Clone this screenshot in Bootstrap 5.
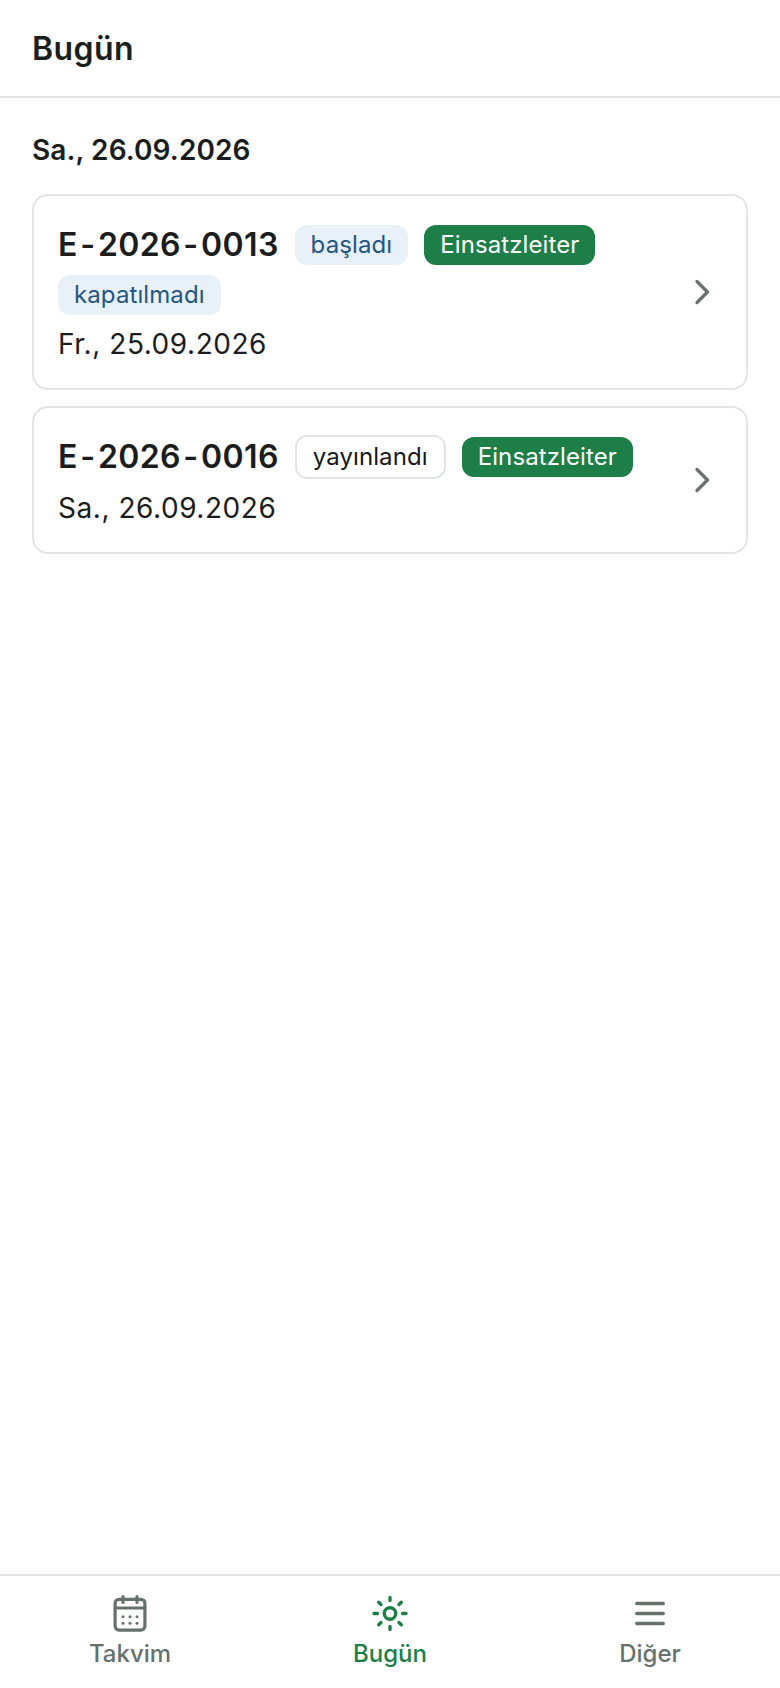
<!DOCTYPE html>
<html lang="tr">
<head>
    <meta charset="UTF-8">
    <meta name="viewport" content="width=device-width, initial-scale=1.0">
    <title>Bugün</title>
    <link href="https://cdn.jsdelivr.net/npm/bootstrap@5.3.0/dist/css/bootstrap.min.css" rel="stylesheet">
    <style>
        html, body { height: 100%; }
        body { font-family: Inter, "Noto Sans", sans-serif; color: #1a1d1c; background: #fff; }
        .app-shell { height: 1688px; }
        .top-bar { height: 98px; padding: 2px 32px 0; border-bottom: 2px solid #e3e5e5; }
        .top-title { font-size: 32px; font-weight: 600; letter-spacing: .4px; margin: 0; color: #1a1f1b; }
        .page-body { padding: 34px 32px 0; }
        .day-title { font-size: 28px; font-weight: 600; line-height: 36px; letter-spacing: .1px; margin: 0 0 26px; }
        .entry-card { border: 2px solid #e3e5e5; border-radius: 16px; padding: 27px 24px 26px; margin-bottom: 16px; }
        .entry-no { font-size: 32px; font-weight: 600; line-height: 44px; letter-spacing: .35px; }
        .entry-dash { margin: 0 2.5px; }
        .entry-date { font-size: 28px; line-height: 36px; letter-spacing: .55px; margin-top: 11px; }
        .tag-pill { display: inline-block; font-size: 24px; line-height: 40px; height: 40px; padding: 0 16px; border-radius: 12px; letter-spacing: .1px; }
        .tag-blue { background: #e9f1f8; color: #245583; }
        .tag-green { background: #1e7e48; color: #fff; }
        .tag-plain { border: 2px solid #e3e5e5; color: #14181a; height: 44px; }
        .tag-row { row-gap: 8px; column-gap: 16px; }
        .chevron-icon { width: 24px; height: 32px; color: #6b7070; margin-right: 7px; }
        .bottom-bar { height: 114px; border-top: 2px solid #e3e5e5; }
        .tab-item { width: 260px; color: #66716c; font-size: 24px; font-weight: 500; line-height: 30px; padding-top: 17px; text-decoration: none; }
        .tab-active { color: #1e7e48; }
        .tab-icon { width: 40px; height: 40px; display: block; margin-bottom: 6px; }
    </style>
</head>
<body>
    <div class="app-shell d-flex flex-column">
        <header class="top-bar d-flex align-items-center flex-shrink-0">
            <h1 class="top-title">Bugün</h1>
        </header>

        <main class="page-body flex-grow-1">
            <h2 class="day-title">Sa., 26.09.2026</h2>

            <div class="entry-card d-flex align-items-center">
                <div class="flex-grow-1">
                    <div class="d-flex flex-wrap align-items-center tag-row">
                        <span class="entry-no">E<span class="entry-dash">-</span>2026<span class="entry-dash">-</span>0013</span>
                        <span class="tag-pill tag-blue">başladı</span>
                        <span class="tag-pill tag-green">Einsatzleiter</span>
                        <span class="tag-pill tag-blue">kapatılmadı</span>
                    </div>
                    <div class="entry-date">Fr., 25.09.2026</div>
                </div>
                <svg class="chevron-icon flex-shrink-0" viewBox="0 0 24 32" fill="none" stroke="currentColor" stroke-width="3.4" stroke-linecap="round" stroke-linejoin="round"><path d="M6 4.500l10.500 10.500L6 25.500"/></svg>
            </div>

            <div class="entry-card d-flex align-items-center">
                <div class="flex-grow-1">
                    <div class="d-flex flex-wrap align-items-center tag-row">
                        <span class="entry-no">E<span class="entry-dash">-</span>2026<span class="entry-dash">-</span>0016</span>
                        <span class="tag-pill tag-plain">yayınlandı</span>
                        <span class="tag-pill tag-green">Einsatzleiter</span>
                    </div>
                    <div class="entry-date">Sa., 26.09.2026</div>
                </div>
                <svg class="chevron-icon flex-shrink-0" viewBox="0 0 24 32" fill="none" stroke="currentColor" stroke-width="3.4" stroke-linecap="round" stroke-linejoin="round"><path d="M6 4.500l10.500 10.500L6 25.500"/></svg>
            </div>
        </main>

        <nav class="bottom-bar d-flex justify-content-between flex-shrink-0">
            <a class="tab-item d-flex flex-column align-items-center" href="#">
                <svg class="tab-icon" viewBox="0 0 40 40" fill="none" stroke="currentColor" stroke-width="3.2" stroke-linecap="round" stroke-linejoin="round">
                    <rect x="5.100" y="6.300" width="29.800" height="30.800" rx="4"/>
                    <path d="M5.100 15h29.800M13 3.500v6M27 3.500v6"/>
                    <g fill="currentColor" stroke="none"><circle cx="13" cy="23.700" r="1.500"/><circle cx="20" cy="23.700" r="1.500"/><circle cx="27" cy="23.700" r="1.500"/><circle cx="13" cy="30.300" r="1.500"/><circle cx="20" cy="30.300" r="1.500"/><circle cx="27" cy="30.300" r="1.500"/></g>
                </svg>
                <span>Takvim</span>
            </a>
            <a class="tab-item tab-active d-flex flex-column align-items-center" href="#">
                <svg class="tab-icon" viewBox="0 0 40 40" fill="none" stroke="currentColor" stroke-width="3.400" stroke-linecap="round">
                    <circle cx="20" cy="20.500" r="5.700"/>
                    <path d="M20 4.500v3M20 33.500v3M4 20.500h3.500M32.500 20.500h3.500M8.700 9.200l2.300 2.300M29 29.500l2.300 2.300M8.700 31.800l2.300-2.300M29 11.500l2.300-2.300"/>
                </svg>
                <span>Bugün</span>
            </a>
            <a class="tab-item d-flex flex-column align-items-center" href="#">
                <svg class="tab-icon" viewBox="0 0 40 40" fill="none" stroke="currentColor" stroke-width="3.400" stroke-linecap="round">
                    <path d="M6.700 10.500h26.600M6.700 20.500h26.600M6.700 30.500h26.600"/>
                </svg>
                <span>Diğer</span>
            </a>
        </nav>
    </div>

    <script src="https://cdn.jsdelivr.net/npm/bootstrap@5.3.0/dist/js/bootstrap.bundle.min.js"></script>
</body>
</html>
